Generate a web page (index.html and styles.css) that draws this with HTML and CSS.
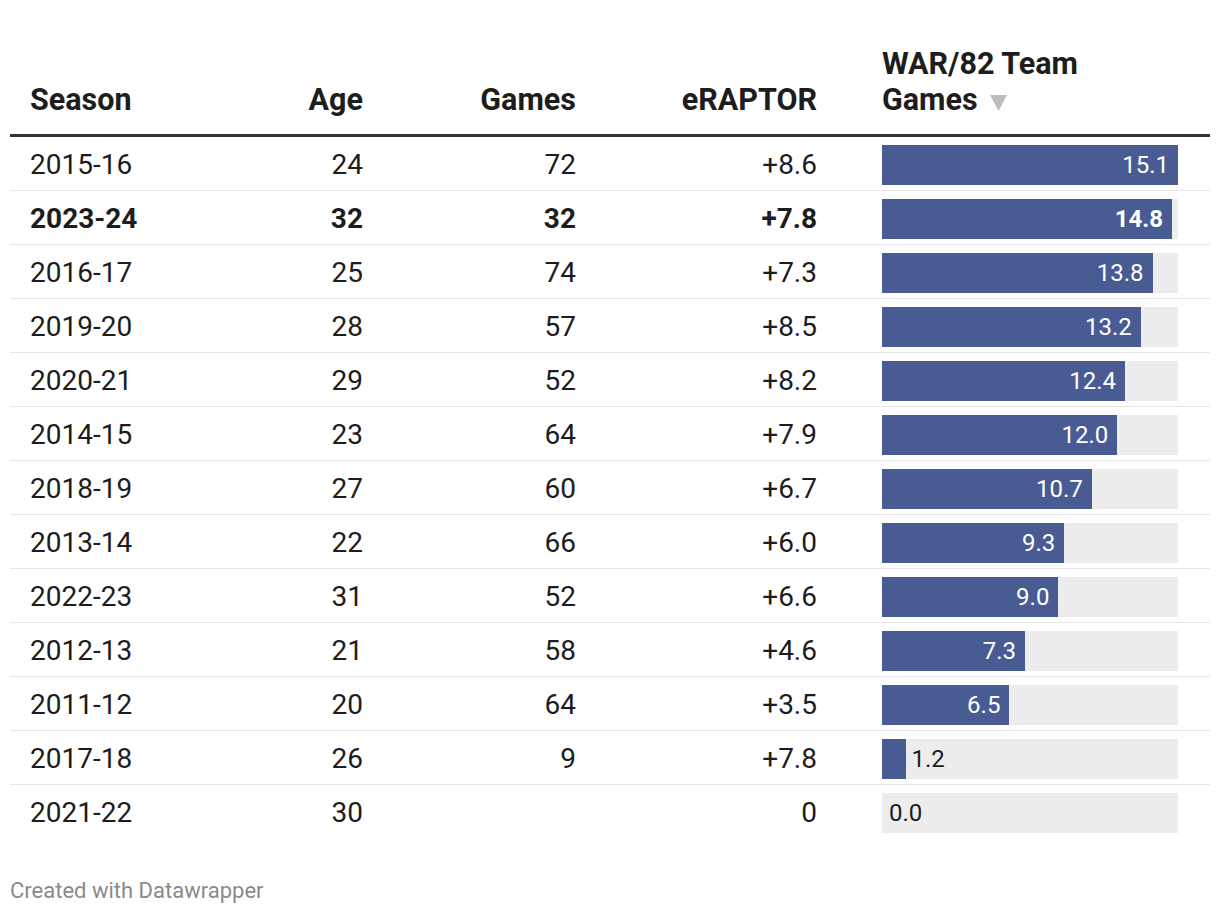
FILE: index.html
```html
<!DOCTYPE html>
<html>
<head>
<meta charset="utf-8">
<link rel="stylesheet" href="styles.css">
</head>
<body>
<div class="chart">
  <div class="row head">
    <div class="cell left">Season</div>
    <div class="cell right">Age</div>
    <div class="cell right">Games</div>
    <div class="cell right">eRAPTOR</div>
    <div class="cell barcell">WAR/82 Team<br>Games <svg class="sort" width="17" height="16" viewBox="0 0 17 16"><path d="M0 0H17L8.5 16Z" fill="#bdbdbd"/></svg></div>
  </div>

  <div class="row">
    <div class="cell left">2015-16</div><div class="cell right">24</div><div class="cell right">72</div><div class="cell right">+8.6</div>
    <div class="cell barcell"><div class="track"><div class="fill" style="width:100%"><span class="lbl in">15.1</span></div></div></div>
  </div>
  <div class="row bold">
    <div class="cell left">2023-24</div><div class="cell right">32</div><div class="cell right">32</div><div class="cell right">+7.8</div>
    <div class="cell barcell"><div class="track"><div class="fill" style="width:98.01%"><span class="lbl in">14.8</span></div></div></div>
  </div>
  <div class="row">
    <div class="cell left">2016-17</div><div class="cell right">25</div><div class="cell right">74</div><div class="cell right">+7.3</div>
    <div class="cell barcell"><div class="track"><div class="fill" style="width:91.39%"><span class="lbl in">13.8</span></div></div></div>
  </div>
  <div class="row">
    <div class="cell left">2019-20</div><div class="cell right">28</div><div class="cell right">57</div><div class="cell right">+8.5</div>
    <div class="cell barcell"><div class="track"><div class="fill" style="width:87.42%"><span class="lbl in">13.2</span></div></div></div>
  </div>
  <div class="row">
    <div class="cell left">2020-21</div><div class="cell right">29</div><div class="cell right">52</div><div class="cell right">+8.2</div>
    <div class="cell barcell"><div class="track"><div class="fill" style="width:82.12%"><span class="lbl in">12.4</span></div></div></div>
  </div>
  <div class="row">
    <div class="cell left">2014-15</div><div class="cell right">23</div><div class="cell right">64</div><div class="cell right">+7.9</div>
    <div class="cell barcell"><div class="track"><div class="fill" style="width:79.47%"><span class="lbl in">12.0</span></div></div></div>
  </div>
  <div class="row">
    <div class="cell left">2018-19</div><div class="cell right">27</div><div class="cell right">60</div><div class="cell right">+6.7</div>
    <div class="cell barcell"><div class="track"><div class="fill" style="width:70.86%"><span class="lbl in">10.7</span></div></div></div>
  </div>
  <div class="row">
    <div class="cell left">2013-14</div><div class="cell right">22</div><div class="cell right">66</div><div class="cell right">+6.0</div>
    <div class="cell barcell"><div class="track"><div class="fill" style="width:61.59%"><span class="lbl in">9.3</span></div></div></div>
  </div>
  <div class="row">
    <div class="cell left">2022-23</div><div class="cell right">31</div><div class="cell right">52</div><div class="cell right">+6.6</div>
    <div class="cell barcell"><div class="track"><div class="fill" style="width:59.6%"><span class="lbl in">9.0</span></div></div></div>
  </div>
  <div class="row">
    <div class="cell left">2012-13</div><div class="cell right">21</div><div class="cell right">58</div><div class="cell right">+4.6</div>
    <div class="cell barcell"><div class="track"><div class="fill" style="width:48.34%"><span class="lbl in">7.3</span></div></div></div>
  </div>
  <div class="row">
    <div class="cell left">2011-12</div><div class="cell right">20</div><div class="cell right">64</div><div class="cell right">+3.5</div>
    <div class="cell barcell"><div class="track"><div class="fill" style="width:43.05%"><span class="lbl in">6.5</span></div></div></div>
  </div>
  <div class="row">
    <div class="cell left">2017-18</div><div class="cell right">26</div><div class="cell right">9</div><div class="cell right">+7.8</div>
    <div class="cell barcell"><div class="track"><div class="fill" style="width:7.95%"></div><span class="lbl out">1.2</span></div></div>
  </div>
  <div class="row last">
    <div class="cell left">2021-22</div><div class="cell right">30</div><div class="cell right"></div><div class="cell right">0</div>
    <div class="cell barcell"><div class="track"><div class="fill" style="width:0%"></div><span class="lbl out zero">0.0</span></div></div>
  </div>

  <div class="footer">Created with Datawrapper</div>
</div>
</body>
</html>
```
FILE: styles.css
```css
html, body {
  margin: 0;
  padding: 0;
  background: #ffffff;
}

.chart {
  padding: 46px 10px 0 10px;
  font-family: Roboto, "Liberation Sans", sans-serif;
  color: #1d1d1d;
}

.row {
  display: grid;
  grid-template-columns: 163px 210px 213px 254px 360px;
  height: 53px;
  align-items: center;
  border-bottom: 1px solid #e6e6e6;
  font-size: 28px;
}

.row.last {
  border-bottom: none;
}

.row.head {
  height: auto;
  align-items: end;
  font-weight: 700;
  font-size: 30.5px;
  line-height: 36px;
  padding-bottom: 16px;
  border-bottom: 3px solid #333333;
}

.row.bold {
  font-weight: 700;
}

.cell {
  padding-top: 1px;
}

.row.head .cell {
  padding-top: 0;
}

.left {
  padding-left: 20px;
  text-align: left;
}

.right {
  padding-right: 20px;
  text-align: right;
}

.row .cell:nth-child(4) {
  padding-right: 33px;
}

.barcell {
  padding-left: 32px;
  padding-right: 32px;
}

.sort {
  display: inline-block;
  vertical-align: -1px;
  margin-left: 5px;
}

.track {
  display: flex;
  align-items: center;
  height: 40px;
  background: #ededed;
  margin-top: 1px;
}

.fill {
  height: 100%;
  background: #485b93;
  display: flex;
  align-items: center;
  justify-content: flex-end;
}

.lbl {
  font-size: 24px;
  line-height: 40px;
}

.lbl.in {
  color: #ffffff;
  padding-right: 9px;
}

.lbl.out {
  color: #1d1d1d;
  padding-left: 6px;
}

.lbl.zero {
  padding-left: 7px;
}

.footer {
  margin-top: 40px;
  font-size: 22px;
  color: #8a8a8a;
}
```
